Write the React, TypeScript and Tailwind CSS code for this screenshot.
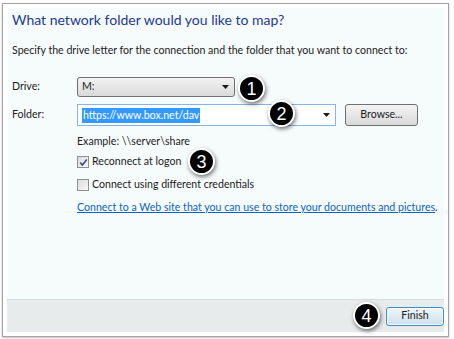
import React from "react";

function Badge({ n, className }: { n: number; className: string }) {
  return (
    <div
      className={`absolute flex h-[27px] w-[27px] items-center justify-center rounded-full border-2 border-white bg-black text-[18px] leading-none text-white shadow-[1px_2px_4px_rgba(0,0,0,0.55)] ${className}`}
      style={{ fontFamily: '"Liberation Sans", Arial, sans-serif' }}
    >
      {n}
    </div>
  );
}

function Arrow() {
  return (
    <svg width="7" height="4" viewBox="0 0 7 4" className="shrink-0">
      <path d="M0 0h7L3.5 4z" fill="#1a1a1a" />
    </svg>
  );
}

function CheckBox({ checked }: { checked?: boolean }) {
  return (
    <span className="flex h-[12px] w-[12px] shrink-0 items-center justify-center border border-[#8e8f8f] bg-gradient-to-br from-[#dcdcdc] to-[#f8f8f8]">
      {checked && (
        <svg width="9" height="9" viewBox="0 0 9 9">
          <path d="M1.2 4.6l2.2 2.4L7.8 1.4" fill="none" stroke="#3a4f8a" strokeWidth="1.6" />
        </svg>
      )}
    </span>
  );
}

export default function App() {
  return (
    <div
      className="relative h-[339px] w-[454px] overflow-hidden bg-white text-[10.6px] text-[#1b1b1b]"
      style={{ fontFamily: 'Lato, "Open Sans", sans-serif' }}
    >
      <div className="ml-[2px] mt-[3px] flex h-[334px] w-[447px] flex-col border border-[#a3a3a3] bg-white px-[4px] pt-[4px] pb-[4px] shadow-[0_1px_2px_rgba(0,0,0,0.25)]">
        {/* Content */}
        <div className="flex flex-1 flex-col bg-[#f6fbfc] pl-[5px]">
          <div className="h-[24px] text-[14px] leading-[24px] text-[#1f3a8f]">
            What network folder would you like to map?
          </div>

          <div className="mt-[10px] h-[16px] whitespace-nowrap leading-[16px]">
            Specify the drive letter for the connection and the folder that you want to connect to:
          </div>

          {/* Drive */}
          <div className="mt-[19px] flex h-[20px] items-center">
            <span className="w-[65px]">Drive:</span>
            <div className="flex h-[20px] w-[158px] items-center justify-between rounded-[3px] border border-[#707070] bg-gradient-to-b from-[#f3f3f3] to-[#dadada] pl-[4px] pr-[5px]">
              <span>M:</span>
              <Arrow />
            </div>
          </div>

          {/* Folder */}
          <div className="mt-[7px] flex h-[22px] items-center">
            <span className="w-[65px]">Folder:</span>
            <div className="flex h-[22px] w-[259px] items-center justify-between border border-[#84b5e6] bg-white pl-[4px] pr-[5px]">
              <span className="bg-[#3399ff] px-[1px] leading-[15px] text-white">https://www.box.net/dav</span>
              <Arrow />
            </div>
            <button className="ml-[9px] flex h-[22px] w-[73px] items-center justify-center rounded-[3px] border border-[#707070] bg-gradient-to-b from-[#f4f4f4] to-[#d9d9d9]">
              Browse...
            </button>
          </div>

          <div className="ml-[65px] mt-[7px] h-[16px] leading-[16px]">Example: \\server\share</div>

          <label className="ml-[65px] mt-[5px] flex h-[16px] items-center gap-[3px]">
            <CheckBox checked />
            <span>Reconnect at logon</span>
          </label>

          <label className="ml-[65px] mt-[7px] flex h-[16px] items-center gap-[3px]">
            <CheckBox />
            <span>Connect using different credentials</span>
          </label>

          <div className="ml-[65px] mt-[6px] h-[16px] whitespace-nowrap leading-[16px]">
            <a className="text-[#0a63c2] underline">
              Connect to a Web site that you can use to store your documents and pictures
            </a>
            .
          </div>
        </div>

        {/* Footer */}
        <div className="flex h-[33px] items-center justify-end border-t border-[#d6dcdd] bg-[#e7ebec]">
          <button className="flex h-[19px] w-[58px] items-center justify-center rounded-[3px] border border-[#3c8fc4] bg-gradient-to-b from-[#eef6fb] to-[#cfdfe9] shadow-[inset_0_0_0_1px_rgba(255,255,255,0.8)]">
            Finish
          </button>
        </div>
      </div>

      <Badge n={1} className="left-[238px] top-[75px]" />
      <Badge n={2} className="left-[268px] top-[100px]" />
      <Badge n={3} className="left-[188px] top-[148px]" />
      <Badge n={4} className="left-[353px] top-[302px]" />
    </div>
  );
}
